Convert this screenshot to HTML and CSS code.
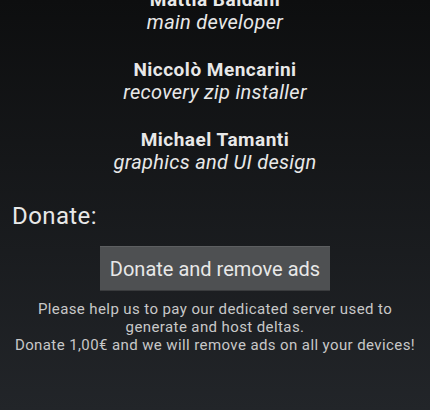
FILE: index.html
```html
<!DOCTYPE html>
<html lang="it">
 <head>
  <meta charset="utf-8" />
  <title>about</title>
  <link rel="stylesheet" href="styles.css">
 </head>
 <body>
  <div id="about">
   <div class="credits">
    <div class="credit">
     <div class="name">Mattia Baldani</div>
     <div class="role">main developer</div>
    </div>
    <div class="credit">
     <div class="name">Niccolò Mencarini</div>
     <div class="role">recovery zip installer</div>
    </div>
    <div class="credit">
     <div class="name">Michael Tamanti</div>
     <div class="role">graphics and UI design</div>
    </div>
   </div>
   <h2 class="section">Donate:</h2>
   <div class="donate">
    <button type="button">Donate and remove ads</button>
    <p class="note">Please help us to pay our dedicated server used to<br />generate and host deltas.<br />Donate 1,00€ and we will remove ads on all your devices!</p>
   </div>
  </div>
 </body>
</html>
```

FILE: styles.css
```css
* { margin: 0; padding: 0; }
html, body {
  height: 100%;
}
body {
  color: #e8e8e8;
  font-family: Roboto, "Noto Sans", sans-serif;
  background: linear-gradient(#0d0e0f, #222529);
  overflow: hidden;
}
.credits {
  margin-top: -11px;
  text-align: center;
}
.credit {
  margin-bottom: 26px;
  line-height: 22px;
}
.credit .name {
  font-size: 19px;
  font-weight: bold;
  letter-spacing: 0.5px;
}
.credit .role {
  font-size: 20px;
  font-style: italic;
  letter-spacing: 0.3px;
}
.section {
  margin: 30px 0 0 12px;
  font-size: 24px;
  font-weight: normal;
  line-height: 27px;
  letter-spacing: 0.4px;
}
.donate {
  margin-top: 16px;
  text-align: center;
}
button {
  width: 230px;
  height: 45px;
  color: #e8e8e8;
  font-family: inherit;
  font-size: 20px;
  background-color: #4e5052;
  border: 0;
  border-top: 1px solid #5d5f61;
  border-bottom: 1px solid #3a3c3e;
}
.note {
  margin-top: 9px;
  color: #c8c8c8;
  font-size: 15px;
  line-height: 18px;
  letter-spacing: 0.4px;
}
```
